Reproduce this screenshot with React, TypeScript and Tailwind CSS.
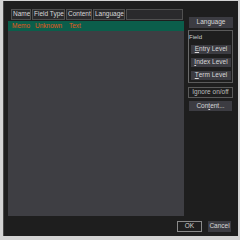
import React from 'react';

const font = { fontFamily: '"Liberation Sans", Arial, sans-serif' };

function Btn({ children, className = '' }: { children: React.ReactNode; className?: string }) {
  return (
    <div className={`flex items-center justify-center bg-[#3c3c42] text-[#d8d8d8] text-[6.5px] leading-none ${className}`}>
      {children}
    </div>
  );
}

export default function App() {
  const headers = [
    { label: 'Name', w: 'w-[20px]' },
    { label: 'Field Type', w: 'w-[33px]' },
    { label: 'Content', w: 'w-[26px]' },
    { label: 'Language', w: 'w-[32px]' },
    { label: '', w: 'w-[57px]' },
  ];

  return (
    <div style={font} className="w-[240px] h-[240px] border-t border-l-[3px] border-r-[2px] border-b-[4px] border-[#d4d4d4]">
      <div className="w-full h-full bg-[#1e1e1e] flex flex-col border-l border-[#4a4a4a]">
        <div className="flex pt-[7px] pl-[4px] gap-[4px]">
          {/* list panel */}
          <div className="w-[176px] h-[208px] bg-[#3e3e43] flex flex-col">
            <div className="flex h-[13px] bg-[#1e1e1e] pl-[3px] pt-[1px] pb-[1px] gap-[1px]">
              {headers.map((h, i) => (
                <div
                  key={i}
                  className={`${h.w} h-[11px] border border-[#505050] bg-[#2a2a2c] text-[#d8d8d8] text-[6.5px] leading-none flex items-center px-[1px] overflow-hidden whitespace-nowrap`}
                >
                  {h.label}
                </div>
              ))}
            </div>
            <div className="h-[10px] mt-[0px] bg-[#0b5e4b] flex items-center text-[#e2581c] text-[6.5px] leading-none whitespace-nowrap">
              <span className="ml-[4px] w-[23px]">Memo</span>
              <span className="w-[34px]">Unknown</span>
              <span>Text</span>
            </div>
          </div>

          {/* side buttons */}
          <div className="w-[45px] flex flex-col pt-[9px]">
            <Btn className="ml-[1px] w-[44px] h-[11px]">Language</Btn>
            <div className="mt-[2px] w-[45px] h-[53px] border border-[#5a5a5a] border-l-[#6a6a6a] flex flex-col">
              <div className="text-[6px] leading-none text-[#cfcfcf] mt-[3px] ml-[0px]">Field</div>
              <div className="flex flex-col gap-[4px] mt-[5px] pl-[2px]">
                <Btn className="w-[40px] h-[9px]"><span className="underline">E</span>ntry Level</Btn>
                <Btn className="w-[40px] h-[9px]"><span className="underline">I</span>ndex Level</Btn>
                <Btn className="w-[40px] h-[9px]"><span className="underline">T</span>erm Level</Btn>
              </div>
            </div>
            <div className="mt-[4px] w-[45px] h-[11px] border border-[#5a5a5a] flex items-center justify-center text-[#bdbdbd] text-[6.5px] leading-none">
              Ignore on/off
            </div>
            <Btn className="mt-[3px] ml-[1px] w-[43px] h-[10px]">Con<span className="underline">t</span>ent...</Btn>
          </div>
        </div>

        {/* bottom buttons */}
        <div className="flex justify-end gap-[6px] pr-[7px] mt-[5px]">
          <div className="w-[25px] h-[11px] border border-[#8a8a8a] bg-[#1e1e1e] text-[#cfcfcf] text-[6.5px] leading-none flex items-center justify-center">
            OK
          </div>
          <Btn className="w-[23px] h-[11px]">Cancel</Btn>
        </div>
      </div>
    </div>
  );
}
